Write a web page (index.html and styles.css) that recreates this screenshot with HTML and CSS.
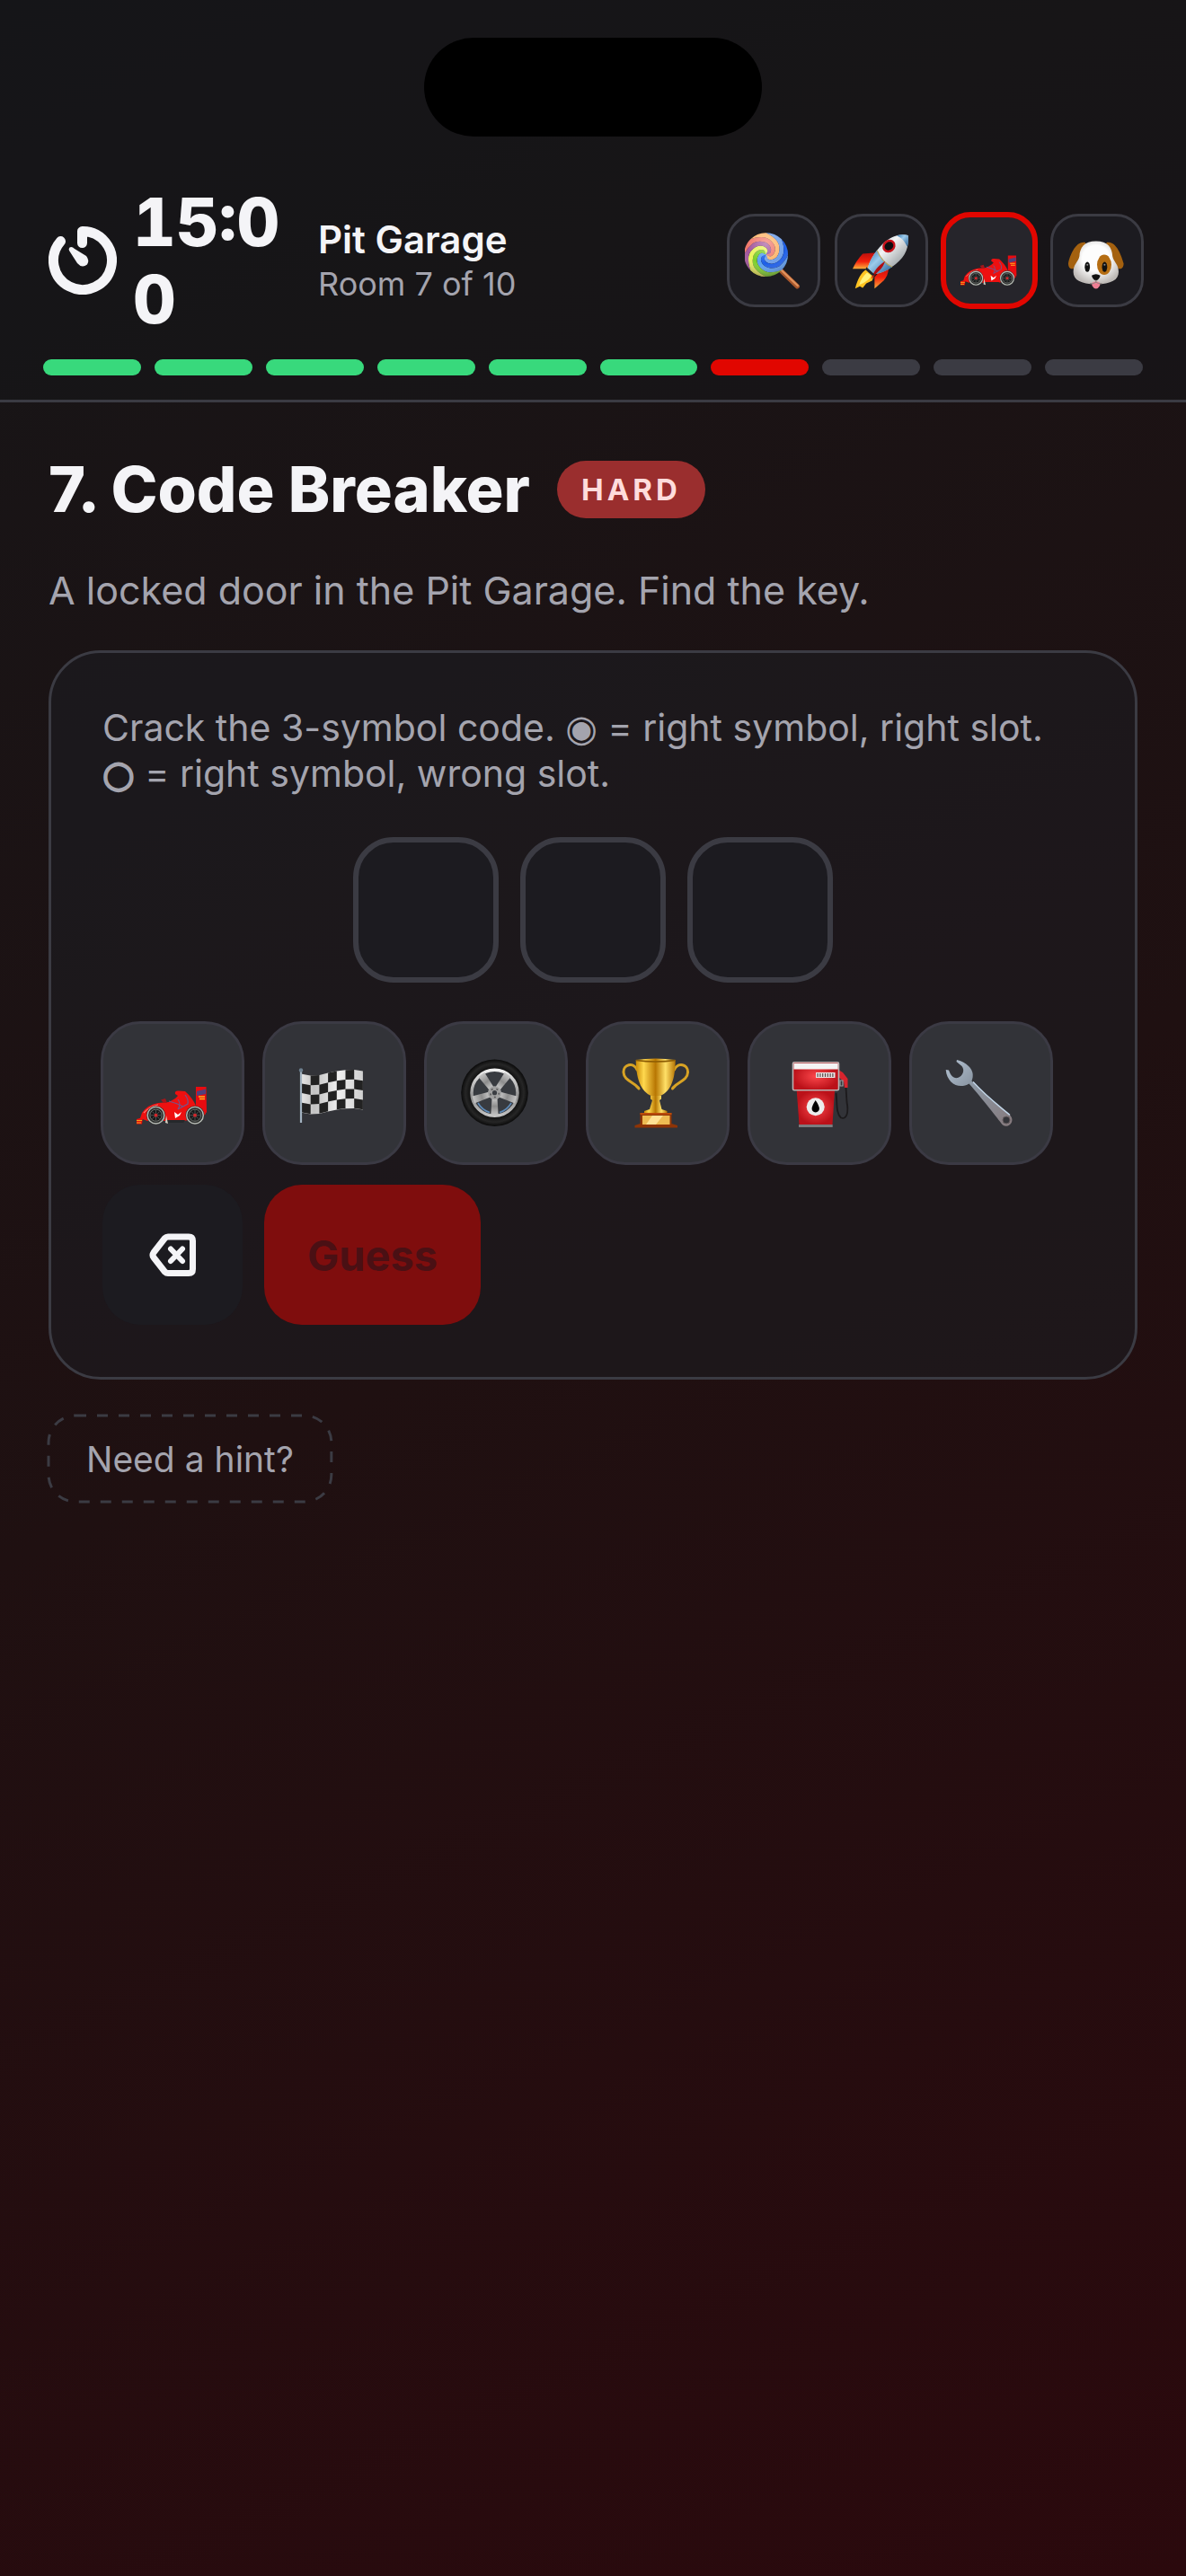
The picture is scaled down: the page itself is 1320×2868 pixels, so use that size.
FILE: index.html
```html
<!DOCTYPE html>
<html lang="en">
<head>
    <meta charset="UTF-8">
    <meta name="viewport" content="width=device-width, initial-scale=1.0">
    <title>Pit Garage</title>
    <link rel="stylesheet" href="styles.css">
</head>
<body>
    <!-- shared drawings -->
    <svg class="sprites" aria-hidden="true">
        <defs>
            <linearGradient id="gold" x1="0" x2="1" y1="0" y2="0">
                <stop offset="0" stop-color="#c98a06"/>
                <stop offset=".2" stop-color="#ffd84e"/>
                <stop offset=".5" stop-color="#b87703"/>
                <stop offset=".75" stop-color="#ffe067"/>
                <stop offset="1" stop-color="#b57404"/>
            </linearGradient>
            <linearGradient id="steel" x1="0" x2="1" y1="0" y2="1">
                <stop offset="0" stop-color="#b4c3d3"/>
                <stop offset=".35" stop-color="#8d99a6"/>
                <stop offset="1" stop-color="#85797c"/>
            </linearGradient>
            <linearGradient id="fin" x1="0" x2="0" y1="0" y2="1">
                <stop offset="0" stop-color="#b80f0c"/>
                <stop offset=".55" stop-color="#f3200d"/>
                <stop offset="1" stop-color="#ffb03a"/>
            </linearGradient>
            <linearGradient id="hull" x1="0" x2="1" y1="0" y2="1">
                <stop offset="0" stop-color="#8fa3b0"/>
                <stop offset=".4" stop-color="#f2f4f5"/>
                <stop offset="1" stop-color="#6b7479"/>
            </linearGradient>
            <linearGradient id="nose" x1="0" x2="1" y1="0" y2="1">
                <stop offset="0" stop-color="#2f73ac"/>
                <stop offset=".4" stop-color="#9ccbec"/>
                <stop offset="1" stop-color="#1f5a91"/>
            </linearGradient>
            <linearGradient id="cloth" x1="0" x2="1" y1="0" y2="0">
                <stop offset="0" stop-color="#e4e4e4"/>
                <stop offset=".2" stop-color="#c2c2c2"/>
                <stop offset=".6" stop-color="#efefef"/>
                <stop offset="1" stop-color="#cfcfcf"/>
            </linearGradient>
            <radialGradient id="tread">
                <stop offset=".72" stop-color="#101010"/>
                <stop offset=".87" stop-color="#262626"/>
                <stop offset="1" stop-color="#0a0a0a"/>
            </radialGradient>
            <linearGradient id="rim" x1="0" x2="0" y1="0" y2="1">
                <stop offset="0" stop-color="#f1f1f1"/>
                <stop offset=".6" stop-color="#8d8d8d"/>
                <stop offset="1" stop-color="#c4c4c4"/>
            </linearGradient>
            <radialGradient id="tank">
                <stop offset="0" stop-color="#fb474b"/>
                <stop offset="1" stop-color="#bb1119"/>
            </radialGradient>
            <radialGradient id="fur" cx=".5" cy=".4" r=".6">
                <stop offset=".5" stop-color="#fdfdfd"/>
                <stop offset="1" stop-color="#bdb9b6"/>
            </radialGradient>
            <radialGradient id="gloss" cx=".5" cy=".25" r=".75">
                <stop offset="0" stop-color="#fff" stop-opacity=".35"/>
                <stop offset=".6" stop-color="#fff" stop-opacity="0"/>
                <stop offset="1" stop-color="#402040" stop-opacity=".35"/>
            </radialGradient>
            <path id="blade" d="M0 0L-5.700 2.100Q-8 6 -6.100 10.600Q-3.500 16.500 3.200 18Q12 20 18.700 15.700Q27 9 30.500 0A30.500 30.500 0 0 1 21.600 21.600Q12.700 25.500 2.100 24.300Q-5.700 22.600 -10.500 15Q-14.100 9.200 -11.800 3.200Q-9.900 -1.400 -5.500 -2.500z"/>
            <g id="carWheel">
                <circle r="10.500" fill="#2d2f2e"/>
                <circle r="9.300" fill="none" stroke="#b7bcb6" stroke-width="1.400"/>
                <circle r="6.600" fill="#17191a" stroke="#6b706c"/>
                <path d="M-6 0H6M0-6V6M-4-4L4 4M-4 4L4-4" stroke="#5c605e" stroke-width=".8"/>
                <circle r="1.900" fill="#d3262a"/>
            </g>

            <symbol id="car" viewBox="0 0 80 80">
                <path d="M0 69L7 67L6 74.500H0z" fill="#e8120c"/>
                <path d="M0 70.500h6M0 73h5" stroke="#f3a21c" stroke-width="1.200"/>
                <path d="M4 68L6 62Q12 53 24 51L36 50L43 46L46 43L43 41Q42 37 47 37.500L54 38Q62 45 66 54L75 53L77 63L72 68L52 71H12z" fill="#ee1010"/>
                <path d="M66 33H77.500L78 62L66 56z" fill="#e80b10"/>
                <path d="M67 38L77 35.500V41L67 43z" fill="#51407c"/>
                <path d="M69 44h7M70 46.500h6" stroke="#ffb11f" stroke-width="1.400"/>
                <path d="M54 42Q58 47 57 52L46 58Q50 52 46 47M36 49Q44 51 52 55" fill="none" stroke="#74548a" stroke-width="1.200"/>
                <path d="M8 62Q14 55 24 53" fill="none" stroke="#ff7670" stroke-width="1.200"/>
                <path d="M27 47.500L32 46L34 51H30z" fill="#a5161a"/>
                <path d="M32 70L54 70L52 73H34z" fill="#25282b"/>
                <path d="M42 61L46 64L50 61L48 65L43 68z" fill="#fff"/>
                <path d="M33 65L35 74L32 73z" fill="#d7d2c4"/>
                <use href="#carWheel" x="21.500" y="64.700"/>
                <use href="#carWheel" x="65" y="64.700"/>
            </symbol>

            <symbol id="flag" viewBox="0 0 80 80">
                <path d="M4 18.700l9.700 1.800l9.700-.5l9.700-2.500l9.700-2l9.700-1.300l9.700-.2l9.700 1.500v43l-9.700-1.500l-9.700.2l-9.700 1.300l-9.700 2l-9.700 2.500l-9.700.5l-9.700-1.800z" fill="url(#cloth)"/>
                <path d="M13.700 20.500l9.700-.5v10.700l-9.700.5zM33.100 17.500l9.700-2v10.700l-9.700 2zM52.500 14.200l9.700-.2v10.700l-9.700.2z
                    M4 29.400l9.700 1.800v10.700l-9.700-1.800zM23.400 30.700l9.700-2.500v10.700l-9.700 2.500zM42.800 26.200l9.700-1.300v10.700l-9.700 1.300zM62.200 24.700l9.700 1.500v10.700l-9.700-1.500z
                    M13.700 41.900l9.700-.5v10.700l-9.700.5zM33.100 38.900l9.700-2v10.700l-9.700 2zM52.500 35.600l9.700-.2v10.700l-9.700.2z
                    M4 50.800l9.700 1.800v10.700l-9.700-1.800zM23.400 52.100l9.700-2.500v10.700l-9.700 2.500zM42.800 47.600l9.700-1.300v10.700l-9.700 1.300zM62.200 46.100l9.700 1.500v10.700l-9.700-1.500z" fill="#222"/>
                <path d="M3 15V73" stroke="#a3b3c1" stroke-width="2.200"/>
                <circle cx="3" cy="14.500" r="2.200" fill="#6c7f8e"/>
            </symbol>

            <symbol id="wheel" viewBox="0 0 80 80">
                <circle cx="38.500" cy="39.700" r="37.300" fill="url(#tread)"/>
                <circle cx="38.500" cy="39.700" r="25.500" fill="#383b40" stroke="url(#rim)" stroke-width="3.500"/>
                <path d="M20 51A22.500 22.500 0 0 0 33 61.500M44 61.500A22.500 22.500 0 0 0 57 51" fill="none" stroke="#5d8ab8" stroke-width="1.600"/>
                <g transform="translate(38.500 39.700)" fill="url(#rim)">
                    <path d="M-2.600 0L-4.200 25H4.200L2.600 0z"/>
                    <path transform="rotate(72)" d="M-2.600 0L-4.200 25H4.200L2.600 0z"/>
                    <path transform="rotate(144)" d="M-2.600 0L-4.200 25H4.200L2.600 0z"/>
                    <path transform="rotate(216)" d="M-2.600 0L-4.200 25H4.200L2.600 0z"/>
                    <path transform="rotate(288)" d="M-2.600 0L-4.200 25H4.200L2.600 0z"/>
                    <circle r="7.500" fill="#a0a0a0"/>
                    <circle r="4.800" fill="none" stroke="#555" stroke-width="1.400" stroke-dasharray="2 4"/>
                    <circle r="2.600" fill="#3a3d42"/>
                </g>
            </symbol>

            <symbol id="trophy" viewBox="0 0 80 80">
                <path d="M17 14C13 5 1.500 8 2 17C2.500 26 12 27 18.500 34M16 32L19 35M58.500 14C62.500 5 74 8 73.500 17C73 26 63.500 27 57 34M59.500 32L56.500 35" fill="none" stroke="#d8a324" stroke-width="3" stroke-linecap="round"/>
                <path d="M15.700 3Q37.500 0 59.700 3C59.500 22 56 38 42 43.500H33.500C20 38 16 22 15.700 3z" fill="url(#gold)"/>
                <path d="M16 3.500Q37.500 6.500 59.500 3.500" fill="none" stroke="#8c5c04" stroke-width="1.500"/>
                <path d="M32 43h12v3.500l-2 1.500l2.500 10l6 2v3H25v-3l6-2L34 48l-2-1.500z" fill="url(#gold)"/>
                <path d="M20.500 62H55.500V74L62 76V78.500H14.500V76L20.500 74z" fill="#8e3406"/>
                <path d="M20.500 62H55.500V64H20.500z" fill="#bb4b0b"/>
                <path d="M23 65H53.500V75H23z" fill="#eebb52"/>
                <path d="M34 65H46L38 75H27z" fill="#ffe193"/>
            </symbol>

            <symbol id="pump" viewBox="0 0 80 80">
                <path d="M58.500 40C60 50 58 62 64 67.500C71 70 72.500 60 70.500 50L69.500 34" fill="none" stroke="#1c1a1c" stroke-width="1.800"/>
                <path d="M14.700 37H57L54.500 75H17.500z" fill="url(#tank)"/>
                <path d="M17 75H54.700V78H17z" fill="#7b7b7e"/>
                <path d="M61 14L66 17L71.500 24V34L68 34L67 27L61 22z" fill="#d7242d"/>
                <path d="M63 26H66V32H63z" fill="none" stroke="#9c9ea0" stroke-width="1.200"/>
                <rect x="10.500" y="5.800" width="51" height="31" rx="1.500" fill="url(#tank)" stroke="#b9b2b2" stroke-width="1.600"/>
                <path d="M11.500 7H60.700V13.500H11.500z" fill="#f4f4f4"/>
                <path d="M36 17H57.500V23H36z" fill="#e9e2e2"/>
                <path d="M37.500 20H56.500" stroke="#5a4648" stroke-width="4" stroke-dasharray="1.200 1.600"/>
                <circle cx="35.700" cy="55.300" r="10" fill="#ececec"/>
                <path d="M35.700 48Q44 60 35.700 61.500Q27.500 60 35.700 48z" fill="#000"/>
            </symbol>

            <symbol id="wrench" viewBox="0 0 80 80">
                <path d="M13 3C22 5 33 13 30.500 23L29.500 26.500C44 43 60 55 72.500 65C78 71 71 80 64 75.500C58 68 42 47 26.500 29.500C16 36 2 30 .7 14L4 14.500C6 20 9 24 14 23C20 21 22 14 18.500 10L12.500 5z" fill="url(#steel)"/>
                <path d="M31 27.500C45 43 59 53.500 72 64.500" fill="none" stroke="#c3d6e8" stroke-width="1.500"/>
                <circle cx="68" cy="70" r="4" fill="#333439" stroke="#62595c"/>
            </symbol>

            <symbol id="lollipop" viewBox="0 0 80 80">
                <path d="M50 54L73 76" stroke="#a8572c" stroke-width="6.500" stroke-linecap="round"/>
                <path d="M51 53.500L73.500 75" stroke="#e0915c" stroke-width="3" stroke-linecap="round"/>
                <g transform="translate(29.500 32)">
                    <circle r="7" fill="#2267ea"/>
                    <use href="#blade" fill="#5aa0f0"/>
                    <use href="#blade" transform="rotate(45)" fill="#7bcf2a"/>
                    <use href="#blade" transform="rotate(90)" fill="#e8f35a"/>
                    <use href="#blade" transform="rotate(135)" fill="#a2559b"/>
                    <use href="#blade" transform="rotate(180)" fill="#f0776a"/>
                    <use href="#blade" transform="rotate(225)" fill="#ffb56b"/>
                    <use href="#blade" transform="rotate(270)" fill="#6f9fe8"/>
                    <use href="#blade" transform="rotate(315)" fill="#1d5fe8"/>
                    <circle r="30.500" fill="url(#gloss)"/>
                </g>
            </symbol>

            <symbol id="rocket" viewBox="0 0 80 80">
                <path d="M20 52C12 56 7 66 3.500 79L10 76L14 78L19 72L27 68L31 58z" fill="#ffc321"/>
                <path d="M20 57C14 62 11 68 9 74C17 71 23 67 26 61z" fill="#fff27c"/>
                <path d="M33 29L14 30.500Q5 40 0 51.500H23z" fill="url(#fin)"/>
                <path d="M47 45L50 52Q49 62 43 68L30.500 79V63z" fill="url(#fin)"/>
                <path d="M77 5C79 20 74 34 60 45C50 53 40 58 30 59L21 51C24 38 34 23 46 13C56 6 66 2 77 5z" fill="url(#hull)"/>
                <path d="M77 5C78 11 77.500 16 76 21C73 14 68 8 61.500 5.500C66 3.500 72 3.500 77 5z" fill="url(#nose)"/>
                <path d="M34 26C38 36 46 45 55 49C46 55 38 58 30 59L21 51C23 42 28 33 34 26z" fill="url(#nose)"/>
                <path d="M34 26C38 36 46 45 55 49" fill="none" stroke="#b9a55c" stroke-width="1.400"/>
                <path d="M45 41C36 47 28 56 26 66L33 58C40 52 43 48 45 41z" fill="#b10d10"/>
                <path d="M19 49L31 60L27 61L18 53z" fill="#1a2430"/>
                <ellipse cx="50.500" cy="20" rx="8" ry="7" transform="rotate(-40 50.500 20)" fill="#0d0d10" stroke="#c8121b" stroke-width="3"/>
            </symbol>

            <symbol id="dog" viewBox="0 0 80 80">
                <path d="M24 15C10 12 2 34 0 44C0 53 7 53 10 49L22 28zM53 15C67 12 74 34 77 44C77 53 70 53 67 49L55 28z" fill="#a4610f"/>
                <path d="M38.500 13C55 13 61 22 61.500 34C63 42 70 45 70 56C70 67 60 73 38.500 73C17 73 7 67 7 56C7 45 14 42 15.500 34C16 22 22 13 38.500 13z" fill="url(#fur)"/>
                <ellipse cx="50" cy="46" rx="10" ry="14" fill="#b56d12"/>
                <ellipse cx="26.500" cy="49" rx="3.600" ry="7" fill="#111"/>
                <ellipse cx="50.500" cy="49" rx="3.600" ry="7" fill="#111"/>
                <circle cx="26.500" cy="46" r="1.300" fill="#8a8a8a"/>
                <circle cx="50.500" cy="46" r="1.300" fill="#8a8a8a"/>
                <path d="M33 71Q38.500 67 44 71V75Q38.500 84 33 75z" fill="#ee7f94"/>
                <path d="M32.500 61Q38.500 57 44.500 61Q43 67 38.500 68Q34 67 32.500 61z" fill="#111"/>
                <path d="M38.500 67V71M30 72Q36 73 38.500 70Q41 73 47 72" fill="none" stroke="#8d8581" stroke-width="1.200"/>
            </symbol>
        </defs>
    </svg>

    <header class="header">
        <div class="island"></div>
        <div class="status">
            <div class="timer">
                <svg class="timer-icon" viewBox="0 0 76 76" aria-hidden="true">
                    <path d="M37.500 18.500V5.500A32.500 32.500 0 1 1 13.500 16.600" fill="none" stroke="#f4f4f7" stroke-width="11" stroke-linecap="round" stroke-linejoin="round"/>
                    <path d="M23.500 23.500Q26 22 29 25L42 33Q46 38 43 42.500Q37 47 32 41L23 27Q22 25 23.500 23.500z" fill="#f4f4f7"/>
                </svg>
                <span class="time">15:00</span>
            </div>
            <div class="place">
                <div class="place-name">Pit Garage</div>
                <div class="place-room">Room 7 of 10</div>
            </div>
            <div class="worlds">
                <button class="world" aria-label="Candy"><svg><use href="#lollipop"/></svg></button>
                <button class="world" aria-label="Space"><svg><use href="#rocket"/></svg></button>
                <button class="world active" aria-label="Racing"><svg><use href="#car"/></svg></button>
                <button class="world" aria-label="Puppy"><svg><use href="#dog"/></svg></button>
            </div>
        </div>
        <div class="progress">
            <i class="done"></i><i class="done"></i><i class="done"></i><i class="done"></i><i class="done"></i><i class="done"></i><i class="current"></i><i></i><i></i><i></i>
        </div>
    </header>

    <main class="room">
        <div class="heading">
            <h1>7. Code Breaker</h1>
            <span class="level">HARD</span>
        </div>
        <p class="intro">A locked door in the Pit Garage. Find the key.</p>

        <section class="card">
            <p class="rules">Crack the 3-symbol code. <span class="mark">◉</span> = right symbol, right slot. <span class="mark empty">○</span>&nbsp;= right symbol, wrong slot.</p>
            <div class="slots">
                <div class="slot"></div>
                <div class="slot"></div>
                <div class="slot"></div>
            </div>
            <div class="keys">
                <button class="key" aria-label="Race car"><svg><use href="#car"/></svg></button>
                <button class="key" aria-label="Flag"><svg><use href="#flag"/></svg></button>
                <button class="key" aria-label="Wheel"><svg><use href="#wheel"/></svg></button>
                <button class="key" aria-label="Trophy"><svg><use href="#trophy"/></svg></button>
                <button class="key" aria-label="Fuel pump"><svg><use href="#pump"/></svg></button>
                <button class="key" aria-label="Wrench"><svg><use href="#wrench"/></svg></button>
                <button class="key erase" aria-label="Delete">
                    <svg viewBox="0 0 52 48" fill="none" stroke="#f4f4f7" stroke-linecap="round" stroke-linejoin="round">
                        <path d="M21 4H44Q48.500 4 48.500 8.500V40Q48.500 44.500 44 44.500H21Q19 44.500 17.500 43L5 27Q3 24.200 5 21.500L17.500 5.500Q19 4 21 4z" stroke-width="7"/>
                        <path d="M24 17.500L37 31M37 17.500L24 31" stroke-width="6"/>
                    </svg>
                </button>
                <button class="guess" disabled>Guess</button>
            </div>
        </section>

        <button class="hint">
            <svg class="hint-border" aria-hidden="true"><rect width="100%" height="100%" rx="30"/></svg>
            Need a hint?
        </button>
    </main>
</body>
</html>
```
FILE: styles.css
```css
*{
    margin: 0;
    padding: 0;
    box-sizing: border-box;
}
body{
    min-height: 100vh;
    background: linear-gradient(155deg, #161618 0%, #1f1011 50%, #2b090d 100%);
    color: #f4f4f7;
    font-family: Inter, "Noto Sans", sans-serif;
}
button{
    border: none;
    font-family: inherit;
    color: inherit;
}
.sprites{
    position: absolute;
    width: 0;
    height: 0;
}
/* top bar */
.header{
    position: relative;
    padding: 204px 48px 27px;
    background-color: rgba(22, 22, 25, 0.6);
    border-bottom: 3px solid #3b3b43;
}
.island{
    position: absolute;
    top: 42px;
    left: 50%;
    width: 376px;
    height: 110px;
    margin-left: -188px;
    border-radius: 55px;
    background-color: #000;
}
.status{
    display: flex;
    align-items: center;
    gap: 36px;
}
.timer{
    display: flex;
    align-items: center;
    gap: 18px;
    padding-left: 6px;
}
.timer-icon{
    width: 76px;
    height: 76px;
}
.time{
    width: 170px;
    font-size: 74px;
    line-height: 86px;
    font-weight: 800;
    font-variant-numeric: tabular-nums;
    word-break: break-all;
}
.place{
    flex: 1;
}
.place-name{
    font-size: 42px;
    line-height: 51px;
    font-weight: 600;
}
.place-room{
    font-size: 36px;
    line-height: 48px;
    color: #a4a4ae;
}
.worlds{
    display: flex;
    gap: 18px;
}
.world{
    display: flex;
    align-items: center;
    justify-content: center;
    width: 102px;
    height: 102px;
    border-radius: 30px;
    background-color: #1c1b20;
    outline: 3px solid #3b3b43;
    outline-offset: -2px;
}
.world svg{
    width: 64px;
    height: 64px;
}
.world.active{
    background-color: #26252b;
    outline: 6px solid #e10600;
    outline-offset: -3px;
}
.progress{
    display: flex;
    gap: 15px;
    margin-top: 24px;
}
.progress i{
    flex: 1;
    height: 18px;
    border-radius: 9px;
    background-color: #3b3b43;
}
.progress .done{
    background-color: #38d97c;
}
.progress .current{
    background-color: #e10600;
}
/* room */
.room{
    padding: 54px;
}
.heading{
    display: flex;
    align-items: center;
    gap: 30px;
}
h1{
    font-size: 70px;
    line-height: 86px;
    font-weight: 800;
}
.level{
    padding: 0 27px;
    border-radius: 32px;
    background-color: #9a2e2e;
    color: #ffdcdc;
    font-size: 33px;
    line-height: 64px;
    font-weight: 700;
    letter-spacing: 4px;
}
.intro{
    margin-top: 42px;
    font-size: 43px;
    line-height: 54px;
    color: #a4a4ae;
}
.card{
    margin-top: 40px;
    padding: 58px 57px;
    border: 3px solid #3b3b43;
    border-radius: 58px;
    background-color: rgba(28, 29, 33, 0.6);
}
.rules{
    font-size: 41px;
    line-height: 51px;
    color: #a4a4ae;
}
.mark{
    font-family: "DejaVu Sans", sans-serif;
    line-height: 1;
}
.mark.empty{
    -webkit-text-stroke: 2px #a4a4ae;
}
.slots{
    display: flex;
    justify-content: center;
    gap: 30px;
    margin-top: 48px;
}
.slot{
    width: 156px;
    height: 156px;
    border-radius: 42px;
    background-color: #1c1b20;
    outline: 6px solid #3b3b43;
    outline-offset: -3px;
}
.keys{
    display: flex;
    flex-wrap: wrap;
    gap: 24px;
    margin-top: 48px;
}
.key{
    display: flex;
    align-items: center;
    justify-content: center;
    width: 156px;
    height: 156px;
    border-radius: 42px;
    background-color: #323338;
    outline: 3px solid #3b3a44;
    outline-offset: -1px;
}
.key svg{
    width: 80px;
    height: 80px;
}
.erase{
    background-color: #1c1b20;
    outline: none;
}
.erase svg{
    width: 52px;
    height: 48px;
}
.guess{
    height: 156px;
    padding: 0 48px;
    border-radius: 42px;
    background-color: #7f0d0d;
    color: #4a1014;
    font-size: 47px;
    font-weight: 700;
}
.hint{
    position: relative;
    display: block;
    height: 96px;
    margin-top: 40px;
    padding: 0 42px;
    background: none;
    color: #a4a4ae;
    font-size: 39px;
}
.hint-border{
    position: absolute;
    top: 0;
    left: 0;
    width: 100%;
    height: 100%;
    overflow: visible;
}
.hint-border rect{
    fill: none;
    stroke: #3b3b43;
    stroke-width: 3;
    stroke-dasharray: 12;
}
```
